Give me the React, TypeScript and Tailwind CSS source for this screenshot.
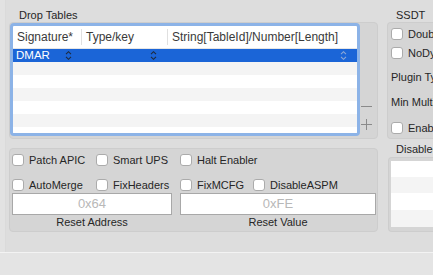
import React from 'react'

const rows = ['bg-[#f4f4f4]', 'bg-white', 'bg-[#f4f4f4]', 'bg-white', 'bg-[#f4f4f4]', 'bg-white']

function Check({ label }: { label: string }) {
  return (
    <div className="flex items-center gap-[5px] h-[12px] whitespace-nowrap">
      <span className="w-[12px] h-[12px] shrink-0 rounded-[3px] border border-[#ababab] bg-white" />
      <span className="leading-[13px]">{label}</span>
    </div>
  )
}

function Stepper({ className }: { className: string }) {
  return (
    <svg width="7" height="11" viewBox="0 0 7 11" className={className} fill="none" stroke="currentColor" strokeWidth="1.1">
      <path d="M1 4.2 L3.5 1.7 L6 4.2" />
      <path d="M1 6.8 L3.5 9.3 L6 6.8" />
    </svg>
  )
}

export default function App() {
  return (
    <div className="w-[433px] h-[275px] overflow-hidden flex flex-col bg-[#e3e3e3] text-[11px] text-[#262626] font-['Liberation_Sans',Arial,sans-serif]">
      <div className="h-[252px] shrink-0 flex">
        <div className="w-[6px] shrink-0 bg-[#e2e2e2] border-r border-[#dadada]" />
        <div className="flex-1 flex bg-[#dddddd] pl-[3px]">
          {/* left column */}
          <div className="w-[369px] shrink-0 flex flex-col">
            <div className="pt-[9px] pl-[10px] h-[22px] leading-[13px]">Drop Tables</div>
            <div className="h-[117px] rounded-[4px] border border-[#cdcdcd] bg-[#d5d5d5] flex items-start">
              <div className="w-[350px] h-[113px] shrink-0 rounded-[4px] border-[3px] border-[#8cb3e7] bg-white overflow-hidden flex flex-col">
                <div className="h-[23px] shrink-0 flex items-center text-[12px] text-[#3a3a3a] border-b border-[#e6e6e6]">
                  <div className="w-[68px] pl-[4px] whitespace-nowrap">Signature*</div>
                  <div className="w-px h-[16px] bg-[#e0e0e0]" />
                  <div className="w-[85px] pl-[4px]">Type/key</div>
                  <div className="w-px h-[16px] bg-[#e0e0e0]" />
                  <div className="flex-1 pl-[4px] whitespace-nowrap">String[TableId]/Number[Length]</div>
                </div>
                <div className="h-[13px] shrink-0 flex items-center bg-[#1b65d7] text-white">
                  <div className="w-[69px] pl-[3px] pr-[10px] flex items-center justify-between">
                    <span className="leading-[13px] text-[11.5px]">DMAR</span>
                    <Stepper className="text-[#1e2a3e]" />
                  </div>
                  <div className="w-[85px] pr-[10px] flex justify-end">
                    <Stepper className="text-[#1e2a3e]" />
                  </div>
                  <div className="flex-1 pr-[10px] flex justify-end">
                    <Stepper className="text-[#8fa9d6]" />
                  </div>
                </div>
                {rows.map((c, i) => (
                  <div key={i} className={`h-[13px] shrink-0 ${c}`} />
                ))}
              </div>
              <div className="ml-[1px] w-[11px] h-full flex flex-col justify-end pb-[5px]">
                <div className="h-[18px] flex items-center">
                  <div className="w-[11px] h-px bg-[#8a8a8a]" />
                </div>
                <div className="h-[18px] flex items-center justify-center relative">
                  <div className="w-[11px] h-px bg-[#8a8a8a]" />
                  <div className="absolute left-[5px] top-[4px] w-px h-[11px] bg-[#8a8a8a]" />
                </div>
              </div>
            </div>

            <div className="mt-[9px] h-[84px] rounded-[4px] border border-[#cdcdcd] bg-[#d5d5d5] pt-[5px] pl-[2px] flex flex-col">
              <div className="flex">
                <div className="w-[84px]"><Check label="Patch APIC" /></div>
                <div className="w-[84px]"><Check label="Smart UPS" /></div>
                <div><Check label="Halt Enabler" /></div>
              </div>
              <div className="flex mt-[13px]">
                <div className="w-[84px]"><Check label="AutoMerge" /></div>
                <div className="w-[84px]"><Check label="FixHeaders" /></div>
                <div className="w-[73px]"><Check label="FixMCFG" /></div>
                <div><Check label="DisableASPM" /></div>
              </div>
              <div className="flex mt-[2px]">
                <div className="w-[160px] flex flex-col items-center">
                  <div className="w-full h-[22px] border border-[#a8a8a8] bg-white flex items-center justify-center text-[13px] text-[#b8b8b8]">0x64</div>
                  <div className="mt-[1px] leading-[13px]">Reset Address</div>
                </div>
                <div className="ml-[8px] w-[196px] flex flex-col items-center">
                  <div className="w-full h-[22px] border border-[#a8a8a8] bg-white flex items-center justify-center text-[13px] text-[#b8b8b8]">0xFE</div>
                  <div className="mt-[1px] leading-[13px]">Reset Value</div>
                </div>
              </div>
            </div>
          </div>

          {/* right column */}
          <div className="ml-[9px] w-[80px] shrink-0 flex flex-col">
            <div className="pt-[9px] pl-[9px] h-[22px] leading-[13px] whitespace-nowrap">SSDT</div>
            <div className="h-[117px] rounded-l-[4px] border border-r-0 border-[#cdcdcd] bg-[#d5d5d5] pl-[3px] pt-[5px] flex flex-col">
              <Check label="DoubleFirstState" />
              <div className="mt-[7px]"><Check label="NoDynamicExtract" /></div>
              <div className="mt-[12px] leading-[13px] whitespace-nowrap">Plugin Type</div>
              <div className="mt-[12px] leading-[13px] whitespace-nowrap">Min Multiplier</div>
              <div className="mt-[13px]"><Check label="EnableC6" /></div>
            </div>
            <div className="mt-[4px] pl-[9px] leading-[13px] whitespace-nowrap">Disabled AML</div>
            <div className="mt-[1px] ml-[1px] h-[75px] rounded-l-[4px] border border-r-0 border-[#cdcdcd] bg-[#d5d5d5] pl-[2px] pt-[3px]">
              <div className="h-[66px] flex flex-col overflow-hidden">
                <div className="h-[16px] bg-white" />
                <div className="h-[16px] bg-[#f4f4f4]" />
                <div className="h-[17px] bg-white" />
                <div className="h-[17px] bg-[#f4f4f4]" />
              </div>
            </div>
          </div>
        </div>
      </div>
      <div className="h-px shrink-0 bg-[#f3f3f3]" />
      <div className="flex-1 bg-[#e4e4e4]" />
    </div>
  )
}
